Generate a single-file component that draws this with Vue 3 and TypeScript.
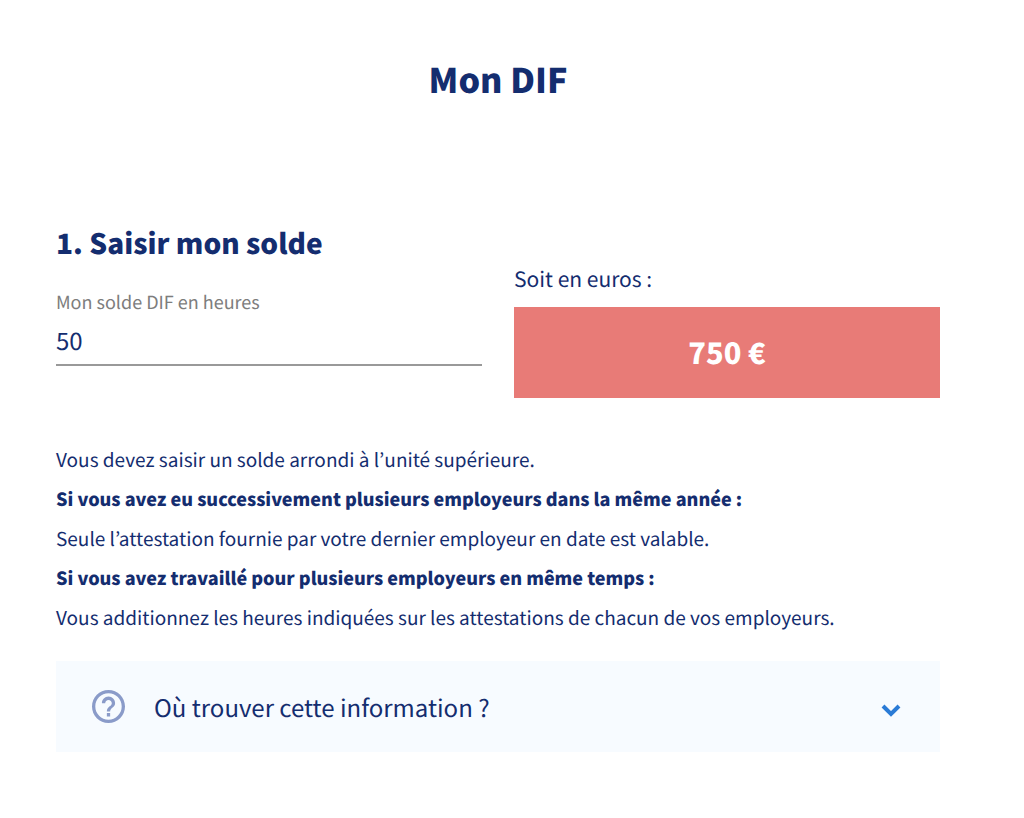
<script setup lang="ts">
import { computed, ref } from 'vue'

const hours = ref('50')
const open = ref(false)
const euros = computed(() => (Number(hours.value) || 0) * 15)
</script>

<template>
  <main class="page">
    <h1>Mon DIF</h1>
    <section class="balance">
      <div class="entry">
        <h2>1. Saisir mon solde</h2>
        <label for="hours">Mon solde DIF en heures</label>
        <input id="hours" v-model="hours" type="text" inputmode="numeric" />
      </div>
      <div class="result">
        <p class="caption">Soit en euros :</p>
        <output for="hours" class="amount">{{ euros }} €</output>
      </div>
    </section>
    <section class="notes">
      <p>Vous devez saisir un solde arrondi à l’unité supérieure.</p>
      <p><strong>Si vous avez eu successivement plusieurs employeurs dans la même année :</strong></p>
      <p>Seule l’attestation fournie par votre dernier employeur en date est valable.</p>
      <p><strong>Si vous avez travaillé pour plusieurs employeurs en même temps :</strong></p>
      <p>Vous additionnez les heures indiquées sur les attestations de chacun de vos employeurs.</p>
    </section>
    <button class="help" type="button" :aria-expanded="open" @click="open = !open">
      <svg class="help-icon" viewBox="2 2 20 20" aria-hidden="true">
        <path d="M11 18h2v-2h-2v2zm1-16C6.480 2 2 6.480 2 12s4.480 10 10 10 10-4.480 10-10S17.520 2 12 2zm0 18c-4.410 0-8-3.590-8-8s3.590-8 8-8 8 3.590 8 8-3.590 8-8 8zm0-14c-2.210 0-4 1.790-4 4h2c0-1.100.9-2 2-2s2 .9 2 2c0 2-3 1.750-3 5h2c0-2.250 3-2.500 3-5 0-2.210-1.790-4-4-4z" />
      </svg>
      <span class="help-text">Où trouver cette information ?</span>
      <svg class="chevron" viewBox="0 0 20 14" aria-hidden="true">
        <path d="M2 3l8 8 8-8" />
      </svg>
    </button>
  </main>
</template>

<style>
body {
  margin: 0;
  background: #fff;
}
</style>

<style scoped>
.page {
  box-sizing: border-box;
  padding: 54px 84px 64px 56px;
  font-family: "Noto Sans CJK KR", "Open Sans", sans-serif;
  color: #142d6f;
  text-rendering: geometricPrecision;
}
h1,
h2,
p {
  margin: 0;
}
h1 {
  font-size: 34px;
  font-weight: 900;
  line-height: 50px;
  text-align: center;
}
.balance {
  display: grid;
  grid-template-columns: 1fr 1fr;
  column-gap: 32px;
  margin-top: 118px;
}
.entry {
  display: flex;
  flex-direction: column;
}
h2 {
  font-size: 28px;
  font-weight: 900;
  line-height: 42px;
}
label {
  margin-top: 24px;
  font-size: 18px;
  line-height: 28px;
  color: #7d7d7d;
}
input {
  width: 100%;
  height: 50px;
  box-sizing: border-box;
  padding: 0 0 2px;
  border: 0;
  border-bottom: 2px solid #999;
  background: none;
  font: inherit;
  font-size: 24px;
  color: inherit;
  outline: 0;
  text-rendering: inherit;
}
.result {
  padding-top: 41px;
}
.caption {
  font-size: 21px;
  line-height: 32px;
}
.amount {
  display: block;
  margin-top: 12px;
  background: #e87b77;
  color: #fff;
  font-size: 29px;
  font-weight: 900;
  line-height: 91px;
  text-align: center;
}
.notes {
  margin-top: 42px;
  font-size: 19px;
  line-height: 39px;
}
strong {
  font-size: 18px;
  font-weight: 900;
}
.help {
  display: flex;
  align-items: center;
  width: 100%;
  height: 91px;
  margin-top: 24px;
  padding: 0 39px 0 36px;
  border: 0;
  background: #f7fbff;
  color: inherit;
  font: inherit;
  font-size: 24px;
  text-align: left;
  text-rendering: inherit;
}
.help-icon {
  width: 33px;
  height: 33px;
  margin-right: 29px;
  fill: #8a9bc9;
}
.help-text {
  flex: 1;
}
.chevron {
  width: 20px;
  height: 14px;
  margin-top: 6px;
  fill: none;
  stroke: #2a7bd6;
  stroke-width: 4;
}
</style>
